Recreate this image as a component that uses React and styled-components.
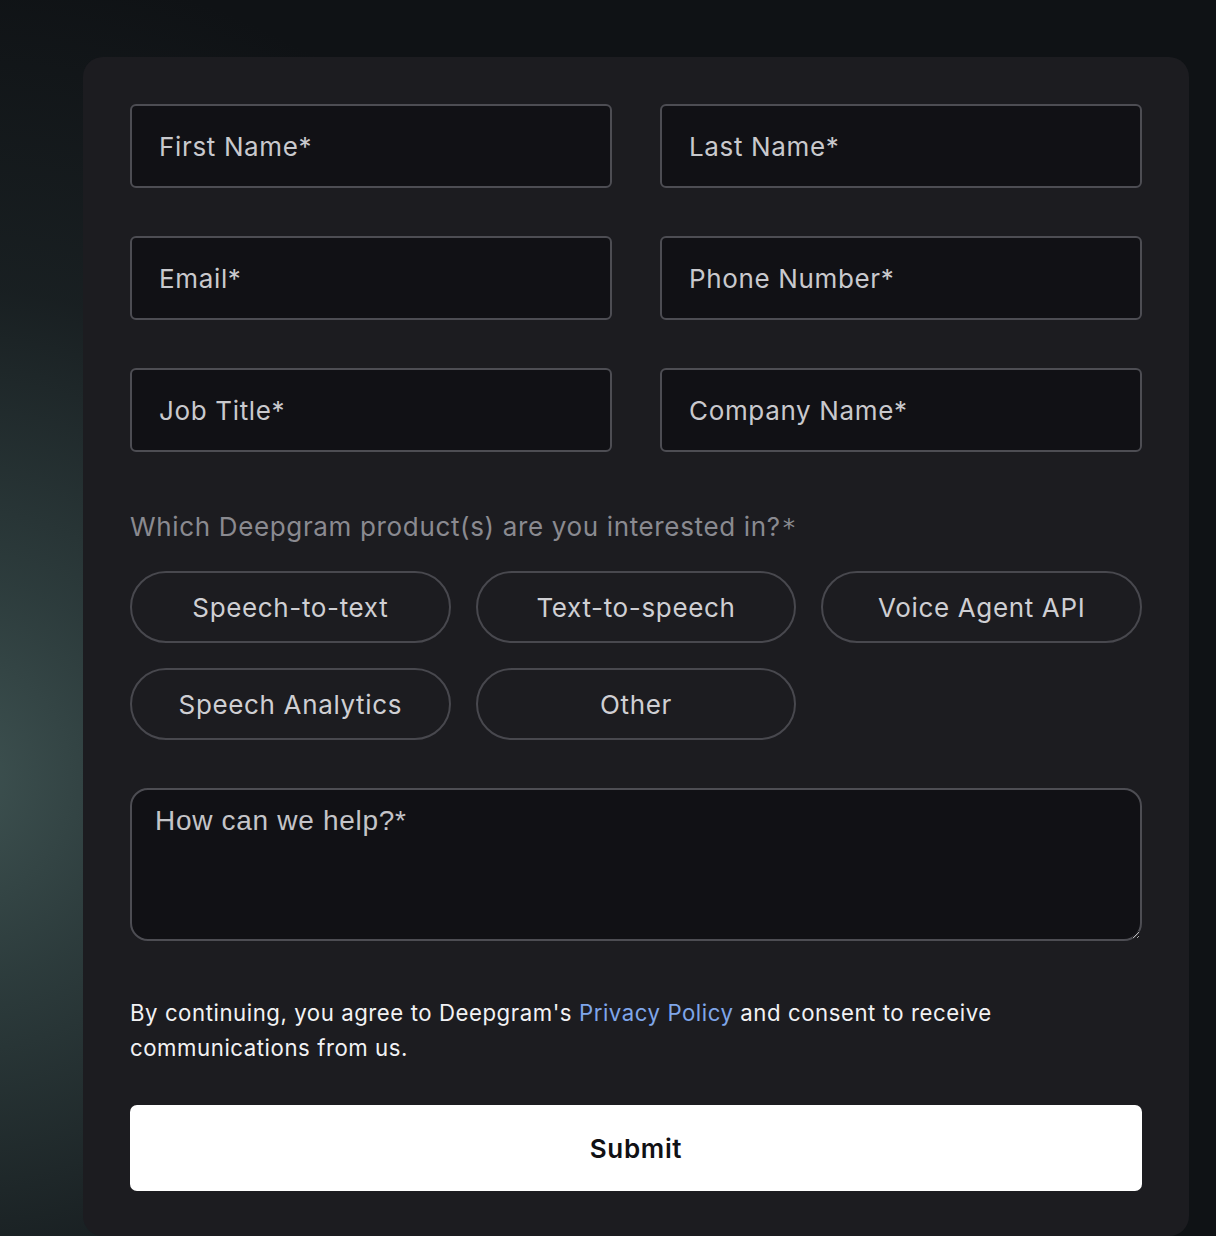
import React from "react";
import styled, { createGlobalStyle } from "styled-components";

const Global = createGlobalStyle`
  html, body { margin: 0; padding: 0; }
  body {
    min-height: 1236px;
    background:
      radial-gradient(ellipse 760px 820px at -40px 780px, rgba(62, 82, 81, 1) 0%, rgba(52, 70, 70, 0.8) 25%, rgba(34, 44, 46, 0.5) 60%, rgba(15, 18, 21, 0) 100%),
      #0f1215;
    font-family: Inter, "Noto Sans", sans-serif;
    overflow: hidden;
  }
`;

const Page = styled.div`
  padding: 57px 27px 0 83px;
`;

const Card = styled.form`
  width: 1106px;
  box-sizing: border-box;
  background: #1c1c20;
  border-radius: 20px;
  padding: 47px 47px 45px;
  display: flex;
  flex-direction: column;
`;

const FieldGrid = styled.div`
  display: grid;
  grid-template-columns: 1fr 1fr;
  column-gap: 48px;
  row-gap: 48px;
`;

const TextInput = styled.input`
  height: 84px;
  box-sizing: border-box;
  border: 2px solid #4d4d53;
  border-radius: 6px;
  background: #111115;
  padding: 0 27px;
  font-family: Inter, sans-serif;
  font-size: 26px;
  letter-spacing: 0.025em;
  color: #d2d2d6;
  outline: none;
  &::placeholder { color: #c9c9cd; opacity: 1; }
`;

const Question = styled.div`
  margin-top: 59px;
  font-size: 26px;
  line-height: 32px;
  letter-spacing: 0.025em;
  color: #8a8a90;
`;

const Star = styled.span`
  font-family: "DejaVu Sans", sans-serif;
  font-size: 0.95em;
  letter-spacing: 0;
  margin-left: 2px;
`;

const PillGrid = styled.div`
  margin-top: 27px;
  display: grid;
  grid-template-columns: repeat(3, 1fr);
  column-gap: 25px;
  row-gap: 25px;
`;

const Pill = styled.button`
  height: 72px;
  border: 2px solid #48484e;
  border-radius: 40px;
  background: transparent;
  font-family: Inter, sans-serif;
  font-size: 26px;
  letter-spacing: 0.025em;
  color: #cfcfd3;
  cursor: pointer;
`;

const TextArea = styled.textarea`
  margin-top: 48px;
  height: 153px;
  box-sizing: border-box;
  border: 2px solid #4d4d53;
  border-radius: 18px;
  background: #111115;
  padding: 15px 23px;
  font-family: "Liberation Sans", Arial, sans-serif;
  font-size: 28px;
  letter-spacing: 0.025em;
  color: #d2d2d6;
  outline: none;
  resize: vertical;
  &::placeholder { color: #c4c4c8; opacity: 1; }
`;

const Consent = styled.p`
  margin: 54px 0 0;
  font-size: 22.2px;
  line-height: 35px;
  letter-spacing: 0.025em;
  color: #f2f2f4;
  max-width: 900px;
`;

const Link = styled.a`
  color: #7fa6ea;
  text-decoration: none;
`;

const Submit = styled.button`
  margin-top: 40px;
  height: 86px;
  border: none;
  border-radius: 7px;
  background: #ffffff;
  font-family: Inter, sans-serif;
  font-size: 26px;
  font-weight: 600;
  letter-spacing: 0.025em;
  color: #111114;
  cursor: pointer;
`;

const fields = [
  "First Name*",
  "Last Name*",
  "Email*",
  "Phone Number*",
  "Job Title*",
  "Company Name*",
];

const products = [
  "Speech-to-text",
  "Text-to-speech",
  "Voice Agent API",
  "Speech Analytics",
  "Other",
];

export default function App() {
  return (
    <>
      <Global />
      <Page>
        <Card onSubmit={(e) => e.preventDefault()}>
          <FieldGrid>
            {fields.map((f) => (
              <TextInput key={f} placeholder={f} />
            ))}
          </FieldGrid>
          <Question>
            Which Deepgram product(s) are you interested in?<Star>*</Star>
          </Question>
          <PillGrid>
            {products.map((p) => (
              <Pill type="button" key={p}>{p}</Pill>
            ))}
          </PillGrid>
          <TextArea placeholder="How can we help?*" />
          <Consent>
            By continuing, you agree to Deepgram's <Link href="#">Privacy Policy</Link> and consent to receive communications from us.
          </Consent>
          <Submit type="submit">Submit</Submit>
        </Card>
      </Page>
    </>
  );
}
